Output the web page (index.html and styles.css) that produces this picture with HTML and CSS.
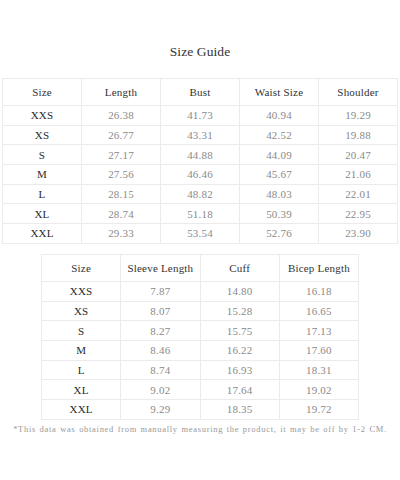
FILE: index.html
```html
<!DOCTYPE html>
<html>
<head>
<meta charset="utf-8">
<link rel="stylesheet" href="styles.css">
</head>
<body>
<div class="page">
  <h1 class="title">Size Guide</h1>
  <table class="grid grid-main">
    <tr class="head"><th>Size</th><th>Length</th><th>Bust</th><th>Waist Size</th><th>Shoulder</th></tr>
    <tr><td class="size">XXS</td><td>26.38</td><td>41.73</td><td>40.94</td><td>19.29</td></tr>
    <tr><td class="size">XS</td><td>26.77</td><td>43.31</td><td>42.52</td><td>19.88</td></tr>
    <tr><td class="size">S</td><td>27.17</td><td>44.88</td><td>44.09</td><td>20.47</td></tr>
    <tr><td class="size">M</td><td>27.56</td><td>46.46</td><td>45.67</td><td>21.06</td></tr>
    <tr><td class="size">L</td><td>28.15</td><td>48.82</td><td>48.03</td><td>22.01</td></tr>
    <tr><td class="size">XL</td><td>28.74</td><td>51.18</td><td>50.39</td><td>22.95</td></tr>
    <tr><td class="size">XXL</td><td>29.33</td><td>53.54</td><td>52.76</td><td>23.90</td></tr>
  </table>
  <table class="grid grid-sleeve">
    <tr class="head"><th>Size</th><th>Sleeve Length</th><th>Cuff</th><th>Bicep Length</th></tr>
    <tr><td class="size">XXS</td><td>7.87</td><td>14.80</td><td>16.18</td></tr>
    <tr><td class="size">XS</td><td>8.07</td><td>15.28</td><td>16.65</td></tr>
    <tr><td class="size">S</td><td>8.27</td><td>15.75</td><td>17.13</td></tr>
    <tr><td class="size">M</td><td>8.46</td><td>16.22</td><td>17.60</td></tr>
    <tr><td class="size">L</td><td>8.74</td><td>16.93</td><td>18.31</td></tr>
    <tr><td class="size">XL</td><td>9.02</td><td>17.64</td><td>19.02</td></tr>
    <tr><td class="size">XXL</td><td>9.29</td><td>18.35</td><td>19.72</td></tr>
  </table>
  <p class="note">*This data was obtained from manually measuring the product, it may be off by 1-2 CM.</p>
</div>
</body>
</html>
```
FILE: styles.css
```css
html, body {
  margin: 0;
  padding: 0;
  background: #fff;
}
.page {
  width: 400px;
  display: flex;
  flex-direction: column;
  align-items: center;
  font-family: "Liberation Serif", "DejaVu Serif", serif;
}
.title {
  margin: 44px 0 18px;
  font-size: 13.5px;
  line-height: 16px;
  font-weight: normal;
  letter-spacing: 0.1px;
  color: #333;
}
.grid {
  border-collapse: collapse;
  table-layout: fixed;
  font-size: 11px;
  letter-spacing: 0.2px;
}
.grid-main {
  width: 396px;
}
.grid-sleeve {
  width: 318px;
  margin-top: 10px;
}
.grid th, .grid td {
  border: 1px solid #ebebeb;
  text-align: center;
  padding: 0;
  font-weight: normal;
}
.grid th {
  height: 26px;
  color: #333;
}
.grid td {
  height: 18.7px;
  color: #8a8a8a;
}
.grid td.size {
  color: #2a2a2a;
}
.note {
  margin: 2px 0 0;
  font-size: 8.5px;
  line-height: 14px;
  letter-spacing: 0.7px;
  word-spacing: 0.8px;
  color: #999;
  white-space: nowrap;
}
```
